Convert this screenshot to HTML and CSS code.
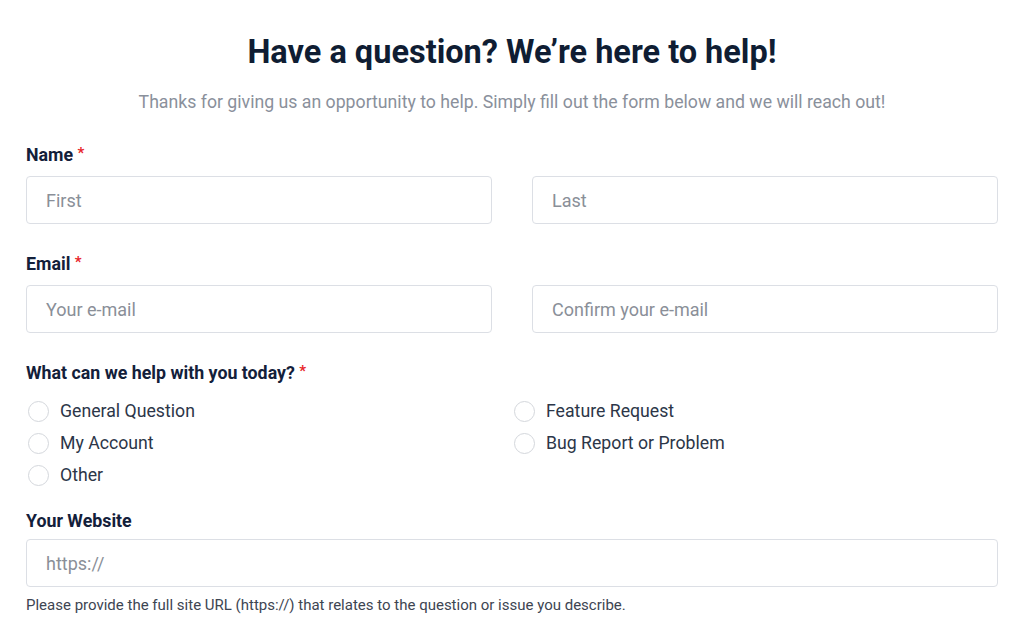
FILE: index.html
```html
<!DOCTYPE html>
<html lang="en">
<head>
<meta charset="utf-8">
<title>Contact</title>
<link rel="stylesheet" href="styles.css">
</head>
<body>
<main class="page">
  <h1 class="title">Have a question? We’re here to help!</h1>
  <p class="subtitle">Thanks for giving us an opportunity to help. Simply fill out the form below and we will reach out!</p>
  <form class="form">
    <div class="field">
      <div class="label">Name <span class="req">*</span></div>
      <div class="row">
        <div class="input">First</div>
        <div class="input">Last</div>
      </div>
    </div>
    <div class="field">
      <div class="label">Email <span class="req">*</span></div>
      <div class="row">
        <div class="input">Your e-mail</div>
        <div class="input">Confirm your e-mail</div>
      </div>
    </div>
    <div class="field field-radios">
      <div class="label">What can we help with you today? <span class="req">*</span></div>
      <div class="radios">
        <div class="radio"><span class="dot"></span>General Question</div>
        <div class="radio"><span class="dot"></span>Feature Request</div>
        <div class="radio"><span class="dot"></span>My Account</div>
        <div class="radio"><span class="dot"></span>Bug Report or Problem</div>
        <div class="radio"><span class="dot"></span>Other</div>
      </div>
    </div>
    <div class="field">
      <div class="label label-tight">Your Website</div>
      <div class="input full">https://</div>
      <p class="help">Please provide the full site URL (https://) that relates to the question or issue you describe.</p>
    </div>
  </form>
</main>
</body>
</html>
```
FILE: styles.css
```css
* { box-sizing: border-box; }
html, body { margin: 0; padding: 0; background: #fff; }
body { font-family: Roboto, "Liberation Sans", sans-serif; color: #13203a; }
.page { padding: 0 26px; }
.title {
  margin: 0;
  padding-top: 32px;
  text-align: center;
  font-size: 32.5px;
  line-height: 40px;
  font-weight: 700;
  color: #0f1d33;
}
.subtitle {
  margin: 18px 0 0;
  text-align: center;
  font-size: 17.7px;
  line-height: 24px;
  color: #8a909b;
}
.form { margin-top: 29px; }
.field { margin-bottom: 28px; }
.field-radios { margin-bottom: 22px; }
.label {
  font-size: 17.8px;
  line-height: 24px;
  font-weight: 700;
  color: #13203a;
  margin-bottom: 8px;
}
.label-tight { margin-bottom: 6px; }
.req { color: #e8262b; font-size: 15px; position: relative; top: -3px; }
.row { display: grid; grid-template-columns: 1fr 1fr; gap: 40px; }
.input {
  height: 48px;
  border: 1px solid #dcdfe5;
  border-radius: 4px;
  padding: 0 19px;
  display: flex;
  align-items: center;
  font-size: 18px;
  color: #8a8f98;
}
.radios {
  display: grid;
  grid-template-columns: 1fr 1fr;
  row-gap: 8px;
  padding-top: 5px;
}
.radio {
  display: flex;
  align-items: center;
  gap: 11px;
  font-size: 17.7px;
  line-height: 24px;
  color: #2c3648;
  padding-left: 2px;
}
.dot {
  width: 21px;
  height: 21px;
  border: 1px solid #d4d7dc;
  border-radius: 50%;
  flex: none;
}
.help {
  margin: 8px 0 0;
  font-size: 15px;
  line-height: 20px;
  color: #3d4552;
}
```
